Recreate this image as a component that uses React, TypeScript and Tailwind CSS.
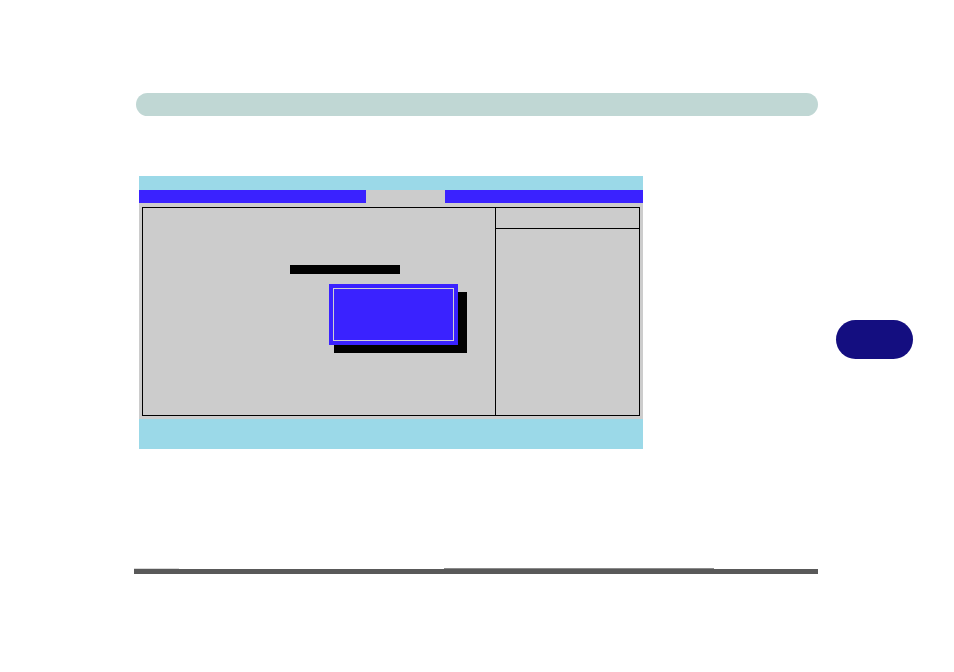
export default function App() {
  return (
    <div className="relative w-[954px] h-[672px] bg-white overflow-hidden flex flex-col">
      <div className="mt-[93px] ml-[136px] w-[682px] h-[23px] rounded-full bg-[#c0d7d4]" />
      <div className="mt-[60px] ml-[139px] w-[504px] h-[273px] flex flex-col bg-[#cccccc]">
        <div className="h-[14px] bg-[#9bd9e8]" />
        <div className="h-[13px] flex">
          <div className="w-[227px] bg-[#3a22ff]" />
          <div className="w-[79px] bg-[#cccccc]" />
          <div className="flex-1 bg-[#3a22ff]" />
        </div>
        <div className="h-[216px] pl-[3px] pr-[3px] pt-[4px] pb-[3px] flex">
          <div className="flex-1 border border-black flex">
            <div className="relative w-[353px] border-r border-black">
              <div className="ml-[147px] mt-[57px] w-[110px] h-[9px] bg-black" />
              <div className="absolute left-[191px] top-[84px] w-[133px] h-[61px] bg-black" />
              <div className="absolute left-[186px] top-[76px] w-[129px] h-[61px] bg-[#3a22ff] p-[4px]">
                <div className="w-full h-full border border-[#d0d0d0]" />
              </div>
            </div>
            <div className="flex-1 flex flex-col">
              <div className="h-[21px] border-b border-black" />
            </div>
          </div>
        </div>
        <div className="h-[30px] bg-[#9bd9e8]" />
      </div>
      <div className="mt-[119px] ml-[134px] w-[684px] h-[6px] flex flex-col">
        <div className="h-[1px] flex">
          <div className="w-[45px] bg-[#d8d8d8]" />
          <div className="w-[265px]" />
          <div className="w-[270px] bg-[#8a8a8a]" />
        </div>
        <div className="h-[5px] bg-[#595959]" />
      </div>
      <div className="absolute left-[836px] top-[320px] w-[77px] h-[39px] rounded-full bg-[#140e80]" />
    </div>
  );
}
